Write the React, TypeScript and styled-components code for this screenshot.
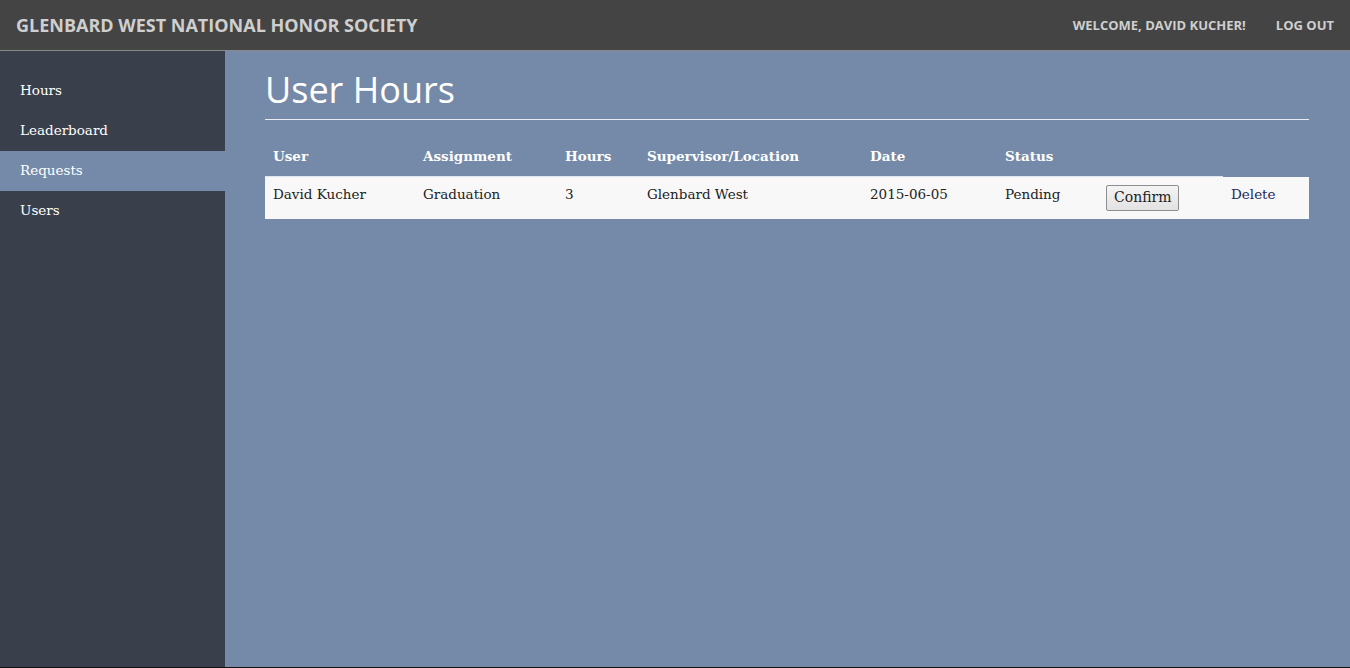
import React from "react";
import styled, { createGlobalStyle } from "styled-components";

const Global = createGlobalStyle`
  html, body { margin: 0; padding: 0; height: 100%; }
  body { background: #758aa8; }
  #root { height: 100%; }
`;

const Page = styled.div`
  display: flex;
  flex-direction: column;
  height: 668px;
  box-sizing: border-box;
  border-bottom: 1px solid #111;
  overflow: hidden;
`;

const TopBar = styled.header`
  height: 50px;
  flex: none;
  background: #444444;
  border-bottom: 1px solid #8a8a8a;
  display: flex;
  align-items: center;
  justify-content: space-between;
  padding: 0 16px;
  font-family: "Open Sans", sans-serif;
  font-weight: 700;
  color: #cfcfcf;
  text-transform: uppercase;
`;

const Brand = styled.div`
  font-size: 18px;
`;

const UserNav = styled.nav`
  display: flex;
  gap: 30px;
  font-size: 13px;
`;

const Body = styled.div`
  flex: 1;
  display: flex;
  min-height: 0;
`;

const Sidebar = styled.aside`
  width: 225px;
  flex: none;
  background: #393f4b;
  padding-top: 20px;
  display: flex;
  flex-direction: column;
`;

const NavItem = styled.a<{ $active?: boolean }>`
  display: flex;
  align-items: center;
  height: 40px;
  padding-left: 20px;
  padding-bottom: 3px;
  box-sizing: border-box;
  font-family: "DejaVu Serif", serif;
  font-size: 13.5px;
  color: #ffffff;
  text-decoration: none;
  background: ${(p) => (p.$active ? "#758aa8" : "transparent")};
`;

const Main = styled.main`
  flex: 1;
  padding: 0 41px 0 40px;
`;

const Title = styled.h1`
  margin: 0;
  padding-top: 17px;
  padding-bottom: 7px;
  font-family: "Open Sans", sans-serif;
  font-weight: 400;
  font-size: 36px;
  line-height: 44px;
  color: #ffffff;
  border-bottom: 1px solid #e8ecf2;
`;

const Table = styled.table`
  margin-top: 26px;
  width: 100%;
  border-collapse: collapse;
  table-layout: fixed;
  font-family: "DejaVu Serif", serif;
  font-size: 13.5px;
  line-height: 20px;
`;

const Th = styled.th`
  text-align: left;
  font-weight: 700;
  color: #ffffff;
  padding: 0 8px 10px;
  border-bottom: 1px solid #dfe5ee;
`;

const Td = styled.td`
  height: 20px;
  padding: 7px 8px 15px;
  color: #222;
  vertical-align: top;
`;

const Row = styled.tr`
  background: #f8f8f8;
`;

const Button = styled.button`
  font-family: "DejaVu Serif", serif;
  font-size: 14px;
  line-height: 17px;
  color: #222;
  background: linear-gradient(#f4f4f4, #e2e2e2);
  border: 1px solid #8e8e8e;
  border-radius: 2px;
  padding: 3px 7px 4px;
  margin: 1px 0 -8px;
  vertical-align: top;
`;

const Link = styled.a`
  color: #24275a;
  text-decoration: none;
`;

export default function App() {
  return (
    <>
      <Global />
      <Page>
        <TopBar>
          <Brand>Glenbard West National Honor Society</Brand>
          <UserNav>
            <span>Welcome, David Kucher!</span>
            <span>Log Out</span>
          </UserNav>
        </TopBar>
        <Body>
          <Sidebar>
            <NavItem>Hours</NavItem>
            <NavItem>Leaderboard</NavItem>
            <NavItem $active>Requests</NavItem>
            <NavItem>Users</NavItem>
          </Sidebar>
          <Main>
            <Title>User Hours</Title>
            <Table>
              <colgroup>
                <col style={{ width: 150 }} />
                <col style={{ width: 142 }} />
                <col style={{ width: 82 }} />
                <col style={{ width: 223 }} />
                <col style={{ width: 135 }} />
                <col style={{ width: 101 }} />
                <col style={{ width: 125 }} />
                <col />
              </colgroup>
              <thead>
                <tr>
                  <Th>User</Th>
                  <Th>Assignment</Th>
                  <Th>Hours</Th>
                  <Th>Supervisor/Location</Th>
                  <Th>Date</Th>
                  <Th>Status</Th>
                  <Th></Th>
                </tr>
              </thead>
              <tbody>
                <Row>
                  <Td>David Kucher</Td>
                  <Td>Graduation</Td>
                  <Td>3</Td>
                  <Td>Glenbard West</Td>
                  <Td>2015-06-05</Td>
                  <Td>Pending</Td>
                  <Td>
                    <Button>Confirm</Button>
                  </Td>
                  <Td>
                    <Link>Delete</Link>
                  </Td>
                </Row>
              </tbody>
            </Table>
          </Main>
        </Body>
      </Page>
    </>
  );
}
